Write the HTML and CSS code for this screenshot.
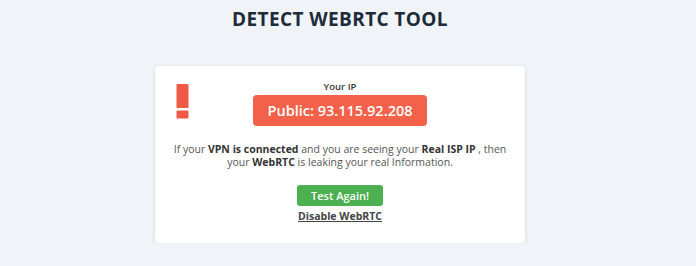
FILE: index.html
```html
<!DOCTYPE html>
<html>
<head>
<meta charset="utf-8">
<link rel="stylesheet" href="styles.css">
</head>
<body>
<main class="page">
  <h1 class="title">DETECT WEBRTC TOOL</h1>
  <section class="card">
    <div class="alert-icon">
      <svg width="13" height="36" viewBox="0 0 13 36"><rect x="0.5" y="0" width="12" height="24" rx="1" fill="#f05a45"/><rect x="0.5" y="26.5" width="12" height="8" rx="1" fill="#f05a45"/></svg>
    </div>
    <div class="card-body">
      <div class="ip-label">Your IP</div>
      <div class="ip-badge">Public: 93.115.92.208</div>
      <p class="message">If your <b>VPN is connected</b> and you are seeing your <b>Real ISP IP</b> , then<br>your <b>WebRTC</b> is leaking your real Information.</p>
      <button class="btn-test">Test Again!</button>
      <a class="disable-link" href="#">Disable WebRTC</a>
    </div>
  </section>
</main>
</body>
</html>
```
FILE: styles.css
```css
html, body {
  margin: 0;
  padding: 0;
  background: #f0f3f7;
}
body {
  font-family: "Open Sans", "Liberation Sans", sans-serif;
  color: #555;
}
.page {
  width: 680px;
  display: flex;
  flex-direction: column;
  align-items: center;
}
.title {
  margin: 6px 0 0;
  font-size: 19px;
  font-weight: 700;
  letter-spacing: 0.4px;
  color: #1e2b3b;
  line-height: 26px;
}
.card {
  position: relative;
  margin-top: 34px;
  width: 370px;
  height: 177px;
  box-sizing: border-box;
  background: #fff;
  border-radius: 4px;
  box-shadow: 0 1px 4px rgba(0, 0, 0, 0.12);
}
.alert-icon {
  position: absolute;
  left: 21px;
  top: 18px;
}
.card-body {
  display: flex;
  flex-direction: column;
  align-items: center;
  padding-top: 15px;
}
.ip-label {
  font-size: 9.5px;
  font-weight: 600;
  color: #333;
  line-height: 12px;
}
.ip-badge {
  margin-top: 2px;
  width: 174px;
  height: 31px;
  box-sizing: border-box;
  background: #f3614a;
  border-radius: 4px;
  color: #fff;
  font-size: 14.5px;
  font-weight: 600;
  line-height: 31px;
  text-align: center;
}
.message {
  margin: 17px 0 0;
  font-size: 10.5px;
  line-height: 13px;
  text-align: center;
  color: #555;
}
.message b {
  color: #333;
  font-weight: 700;
}
.btn-test {
  margin-top: 16px;
  width: 86px;
  height: 21px;
  border: none;
  border-radius: 3px;
  background: #4caf50;
  color: #fff;
  font-family: inherit;
  font-size: 11px;
  font-weight: 600;
  padding: 0;
}
.disable-link {
  margin-top: 3px;
  font-size: 10.5px;
  font-weight: 700;
  color: #444;
  text-decoration: underline;
}
```
